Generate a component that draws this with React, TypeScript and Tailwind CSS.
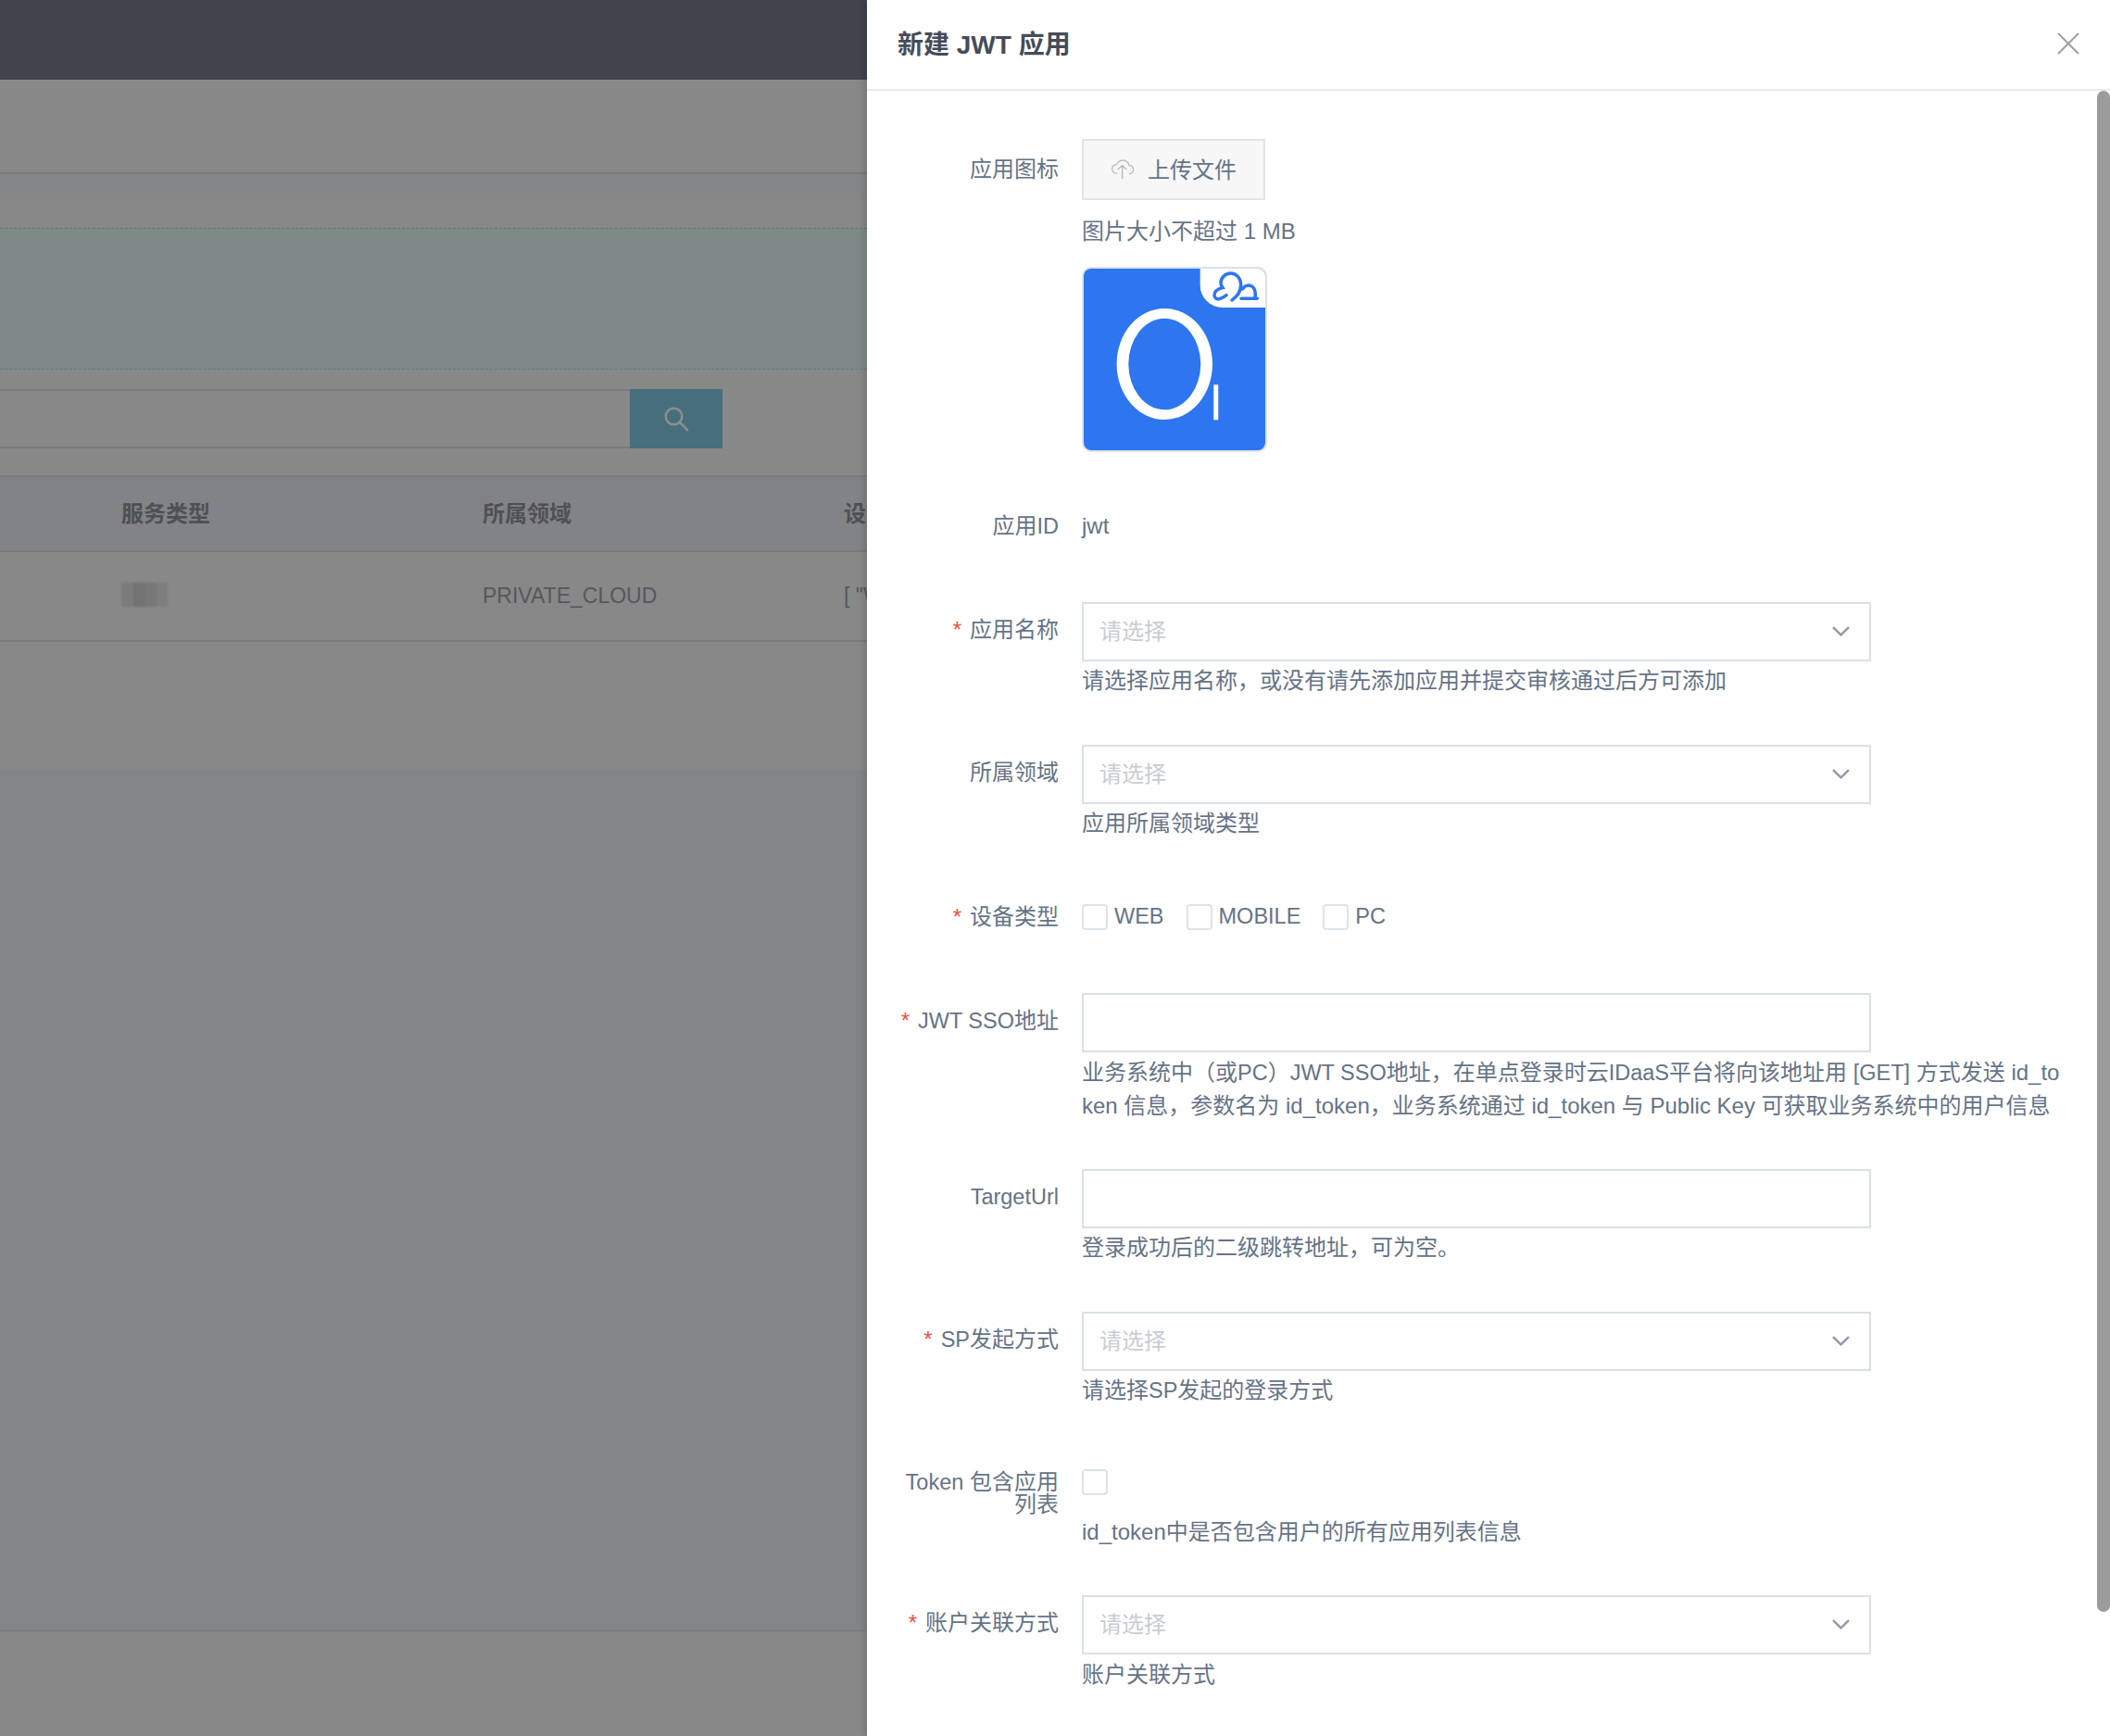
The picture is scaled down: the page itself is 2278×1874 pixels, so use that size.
import React from "react";

const font = "font-['Liberation_Sans','Noto_Sans_CJK_SC',sans-serif]";

// capitals sit a touch narrower than the CJK next to them
function Lat({ children }: { children: React.ReactNode }) {
  return <span className="text-[23.5px]">{children}</span>;
}

function Label({ required, children, className = "" }: { required?: boolean; children: React.ReactNode; className?: string }) {
  return (
    <div className={`w-[207px] shrink-0 pl-[32px] text-right ${className}`}>
      {required && <span className="mr-[9px] text-[#ed4f45]">*</span>}
      {children}
    </div>
  );
}

function Hint({ children, className = "" }: { children: React.ReactNode; className?: string }) {
  return <div className={`leading-[36px] ${className}`}>{children}</div>;
}

function Chevron() {
  return (
    <svg width="19" height="11" viewBox="0 0 19 11" fill="none" stroke="#8f99a8" strokeWidth="2.4" className="-mt-[1px]">
      <path d="M1 1.2 L9.5 9.4 L18 1.2" />
    </svg>
  );
}

function SelectBox() {
  return (
    <div className="flex h-[64px] w-[852px] items-center justify-between border-2 border-[#dbe0e6] pl-[17px] pr-[21px]">
      <span className="text-[#c8ccd3]">请选择</span>
      <Chevron />
    </div>
  );
}

function TextBox() {
  return <div className="h-[64px] w-[852px] border-2 border-[#dbe0e6]" />;
}

function Check() {
  return <span className="block h-[28px] w-[28px] rounded-[4px] border-2 border-[#dfe3e8] bg-white" />;
}

function Row({
  label,
  required,
  hint,
  children,
  className = "",
}: {
  label: React.ReactNode;
  required?: boolean;
  hint?: React.ReactNode;
  children: React.ReactNode;
  className?: string;
}) {
  return (
    <div className={`flex ${className}`}>
      <Label required={required} className="pt-[12px] leading-[36px]">
        {label}
      </Label>
      <div className="ml-[25px] min-w-0 flex-1">
        {children}
        {hint && <Hint className="mt-[3px]">{hint}</Hint>}
      </div>
    </div>
  );
}

function AppLogo() {
  return (
    <div className="mt-[20px] h-[200px] w-[200px] overflow-hidden rounded-[10px] border-2 border-[#dde1e7]">
      <svg width="196" height="196" viewBox="2 2 196 196" className="block">
        <rect x="0" y="0" width="200" height="200" fill="#2d76f0" />
        <path d="M127.7 0 H200 V44 H152 A24 24 0 0 1 127.7 20 Z" fill="#fff" />
        <path
          fillRule="evenodd"
          fill="#fff"
          d="M37.6 105 A51.7 60 0 1 1 141 105 A51.7 60 0 1 1 37.6 105 Z M50.3 105 A39 49.3 0 1 0 128.3 105 A39 49.3 0 1 0 50.3 105 Z"
        />
        <rect x="142.3" y="127.3" width="5" height="38" fill="#fff" />
        <g
          transform="translate(132 0) scale(0.3333)"
          fill="none"
          stroke="#2d76f0"
          strokeWidth="10.5"
          strokeLinecap="round"
        >
          <path d="M90 108 C102 98 119 86 119 58 C119 36 103 21 86 21 C68 21 54 36 54 52 C54 58 56 63 60 68 C44 72 33 80 33 92 C33 100 40 106 48 104 C56 103 64 98 72 92" />
          <path d="M124 72 C130 62 142 59 150 61 C163 65 168 80 165 103 M120 103 H172" />
        </g>
      </svg>
    </div>
  );
}

function Background() {
  return (
    <div className="flex h-[1874px] w-[936px] shrink-0 flex-col overflow-hidden bg-[#888888] text-[24px] text-[#55575c]">
      <div className="h-[86px] bg-[#41444d]" />
      <div className="h-[102px] border-b-2 border-[#7a7a7a]" />
      <div className="h-[27px] bg-[#858688]" />
      <div className="h-[31px]" />
      <div className="h-[153px] border-t border-b border-dashed border-t-[#6b6f6e] border-b-[#52807f] bg-[#7f8a88]" />
      <div className="mt-[21px] flex h-[64px] w-[780px]">
        <div className="flex-1 border-y-2 border-[#7b7b7b]" />
        <div className="flex w-[100px] items-center justify-center bg-[#476e7c]">
          <svg width="28" height="28" viewBox="0 0 28 28" fill="none" stroke="#8a8d8e" strokeWidth="2.6">
            <circle cx="11.5" cy="11.5" r="8.8" />
            <path d="M18 18 L26 26" strokeLinecap="round" />
          </svg>
        </div>
      </div>
      <div className="mt-[29px] flex h-[83px] items-center border-y-2 border-[#7a7a7a] bg-[#828386] pl-[131px] font-semibold text-[#4e5056]">
        <span className="w-[390px] shrink-0">服务类型</span>
        <span className="w-[390px] shrink-0">所属领域</span>
        <span className="shrink-0">设备类型</span>
      </div>
      <div className="flex h-[97px] items-center border-b-2 border-[#7a7a7a] pl-[131px] text-[23px]">
        <div className="w-[390px] shrink-0">
          <div className="-mt-[4px] flex h-[26px] w-[50px] blur-[1px]">
            <div className="flex-1 bg-[#7c7c7c]" />
            <div className="flex-1 bg-[#727273]" />
            <div className="flex-1 bg-[#787878]" />
            <div className="flex-1 bg-[#7e7e7e]" />
          </div>
        </div>
        <span className="w-[390px] shrink-0">PRIVATE_CLOUD</span>
        <span className="shrink-0 whitespace-nowrap">[ "WEB" ]</span>
      </div>
      <div className="h-[138px]" />
      <div className="h-[930px] border-b border-[#797979] bg-[#838486]" />
    </div>
  );
}

function Drawer() {
  return (
    <div className="relative z-10 flex h-[1874px] w-[1342px] shrink-0 flex-col overflow-hidden bg-white text-[24px] text-[#657387] shadow-[-3px_0_8px_rgba(0,0,0,0.15)]">
      <div className="flex h-[98px] shrink-0 items-center justify-between border-b-2 border-[#e8eaec] pl-[33px] pr-[33px]">
        <span className="pt-[1px] text-[28px] font-bold text-[#454c59]">新建 JWT 应用</span>
        <svg width="24" height="24" viewBox="0 0 24 24" fill="none" stroke="#a0a0a0" strokeWidth="2" className="-mt-[3px]">
          <path d="M1 1 L23 23 M23 1 L1 23" />
        </svg>
      </div>

      <div className="w-[1297px] flex-1 pt-[52px]">
        <div className="flex">
          <Label className="pt-[15px] leading-[36px]">应用图标</Label>
          <div className="ml-[25px]">
            <div className="flex h-[66px] w-[198px] items-center border-2 border-[#e0e3e8] bg-[#f7f7f7] pl-[30px]">
              <svg width="24" height="22" viewBox="33 40 66 60" fill="none" stroke="#b2b6bc" strokeWidth="3.5" className="mr-[15px]">
                <path d="M50 82 C40 82 35 75 35 68 C35 60 42 55 48 55 C52 47 60 43 67 43 C77 43 83 50 85 57 C92 57 98 62 98 70 C98 78 92 83 85 83" />
                <path d="M65 98 V58 M52 70 L65 58 L78 70" />
              </svg>
              <span className="pt-[1px]">上传文件</span>
            </div>
            <Hint className="mt-[16px]">图片大小不超过 1 MB</Hint>
            <AppLogo />
          </div>
        </div>

        <div className="mt-[49px] flex h-[62px] items-center">
          <Label className="leading-[36px]">
            应用<Lat>ID</Lat>
          </Label>
          <div className="ml-[25px]">jwt</div>
        </div>

        <Row label="应用名称" required className="mt-[51px]" hint="请选择应用名称，或没有请先添加应用并提交审核通过后方可添加">
          <SelectBox />
        </Row>

        <Row label="所属领域" className="mt-[51px]" hint="应用所属领域类型">
          <SelectBox />
        </Row>

        <div className="mt-[52px] flex h-[62px] items-center">
          <Label required className="leading-[36px]">
            设备类型
          </Label>
          <div className="ml-[25px] flex items-center gap-[24px]">
            {["WEB", "MOBILE", "PC"].map((name) => (
              <label key={name} className="flex items-center gap-[7px]">
                <Check />
                <Lat>{name}</Lat>
              </label>
            ))}
          </div>
        </div>

        <Row
          label={
            <>
              <Lat>JWT SSO</Lat>地址
            </>
          }
          required
          className="mt-[51px]"
          hint={
            <span className="block break-all pt-[1px]">
              业务系统中（或<Lat>PC</Lat>）<Lat>JWT SSO</Lat>地址，在单点登录时云<Lat>IDaaS</Lat>平台将向该地址用 <Lat>[GET]</Lat> 方式发送 id_token 信息，参数名为 id_token，业务系统通过 id_token 与 Public Key 可获取业务系统中的用户信息
            </span>
          }
        >
          <TextBox />
        </Row>

        <Row label={<Lat>TargetUrl</Lat>} className="mt-[50px]" hint="登录成功后的二级跳转地址，可为空。">
          <TextBox />
        </Row>

        <Row
          label={
            <>
              <Lat>SP</Lat>发起方式
            </>
          }
          required
          className="mt-[51px]"
          hint={
            <>
              请选择<Lat>SP</Lat>发起的登录方式
            </>
          }
        >
          <SelectBox />
        </Row>

        <div className="mt-[50px] flex">
          <Label className="pt-[19px] leading-[24px]">
            <Lat>Token</Lat> 包含应用列表
          </Label>
          <div className="ml-[25px]">
            <div className="flex h-[62px] items-center">
              <Check />
            </div>
            <Hint className="mt-[5px]">id_token中是否包含用户的所有应用列表信息</Hint>
          </div>
        </div>

        <Row
          label="账户关联方式"
          required
          className="mt-[50px]"
          hint={<span className="block pt-[1px]">账户关联方式</span>}
        >
          <SelectBox />
        </Row>
      </div>

      <div className="absolute right-0 top-[98px] h-[1642px] w-[14px] rounded-full bg-[#9c9c9c]" />
    </div>
  );
}

export default function App() {
  return (
    <div className={`flex h-[1874px] w-[2278px] overflow-hidden ${font}`}>
      <Background />
      <Drawer />
    </div>
  );
}
